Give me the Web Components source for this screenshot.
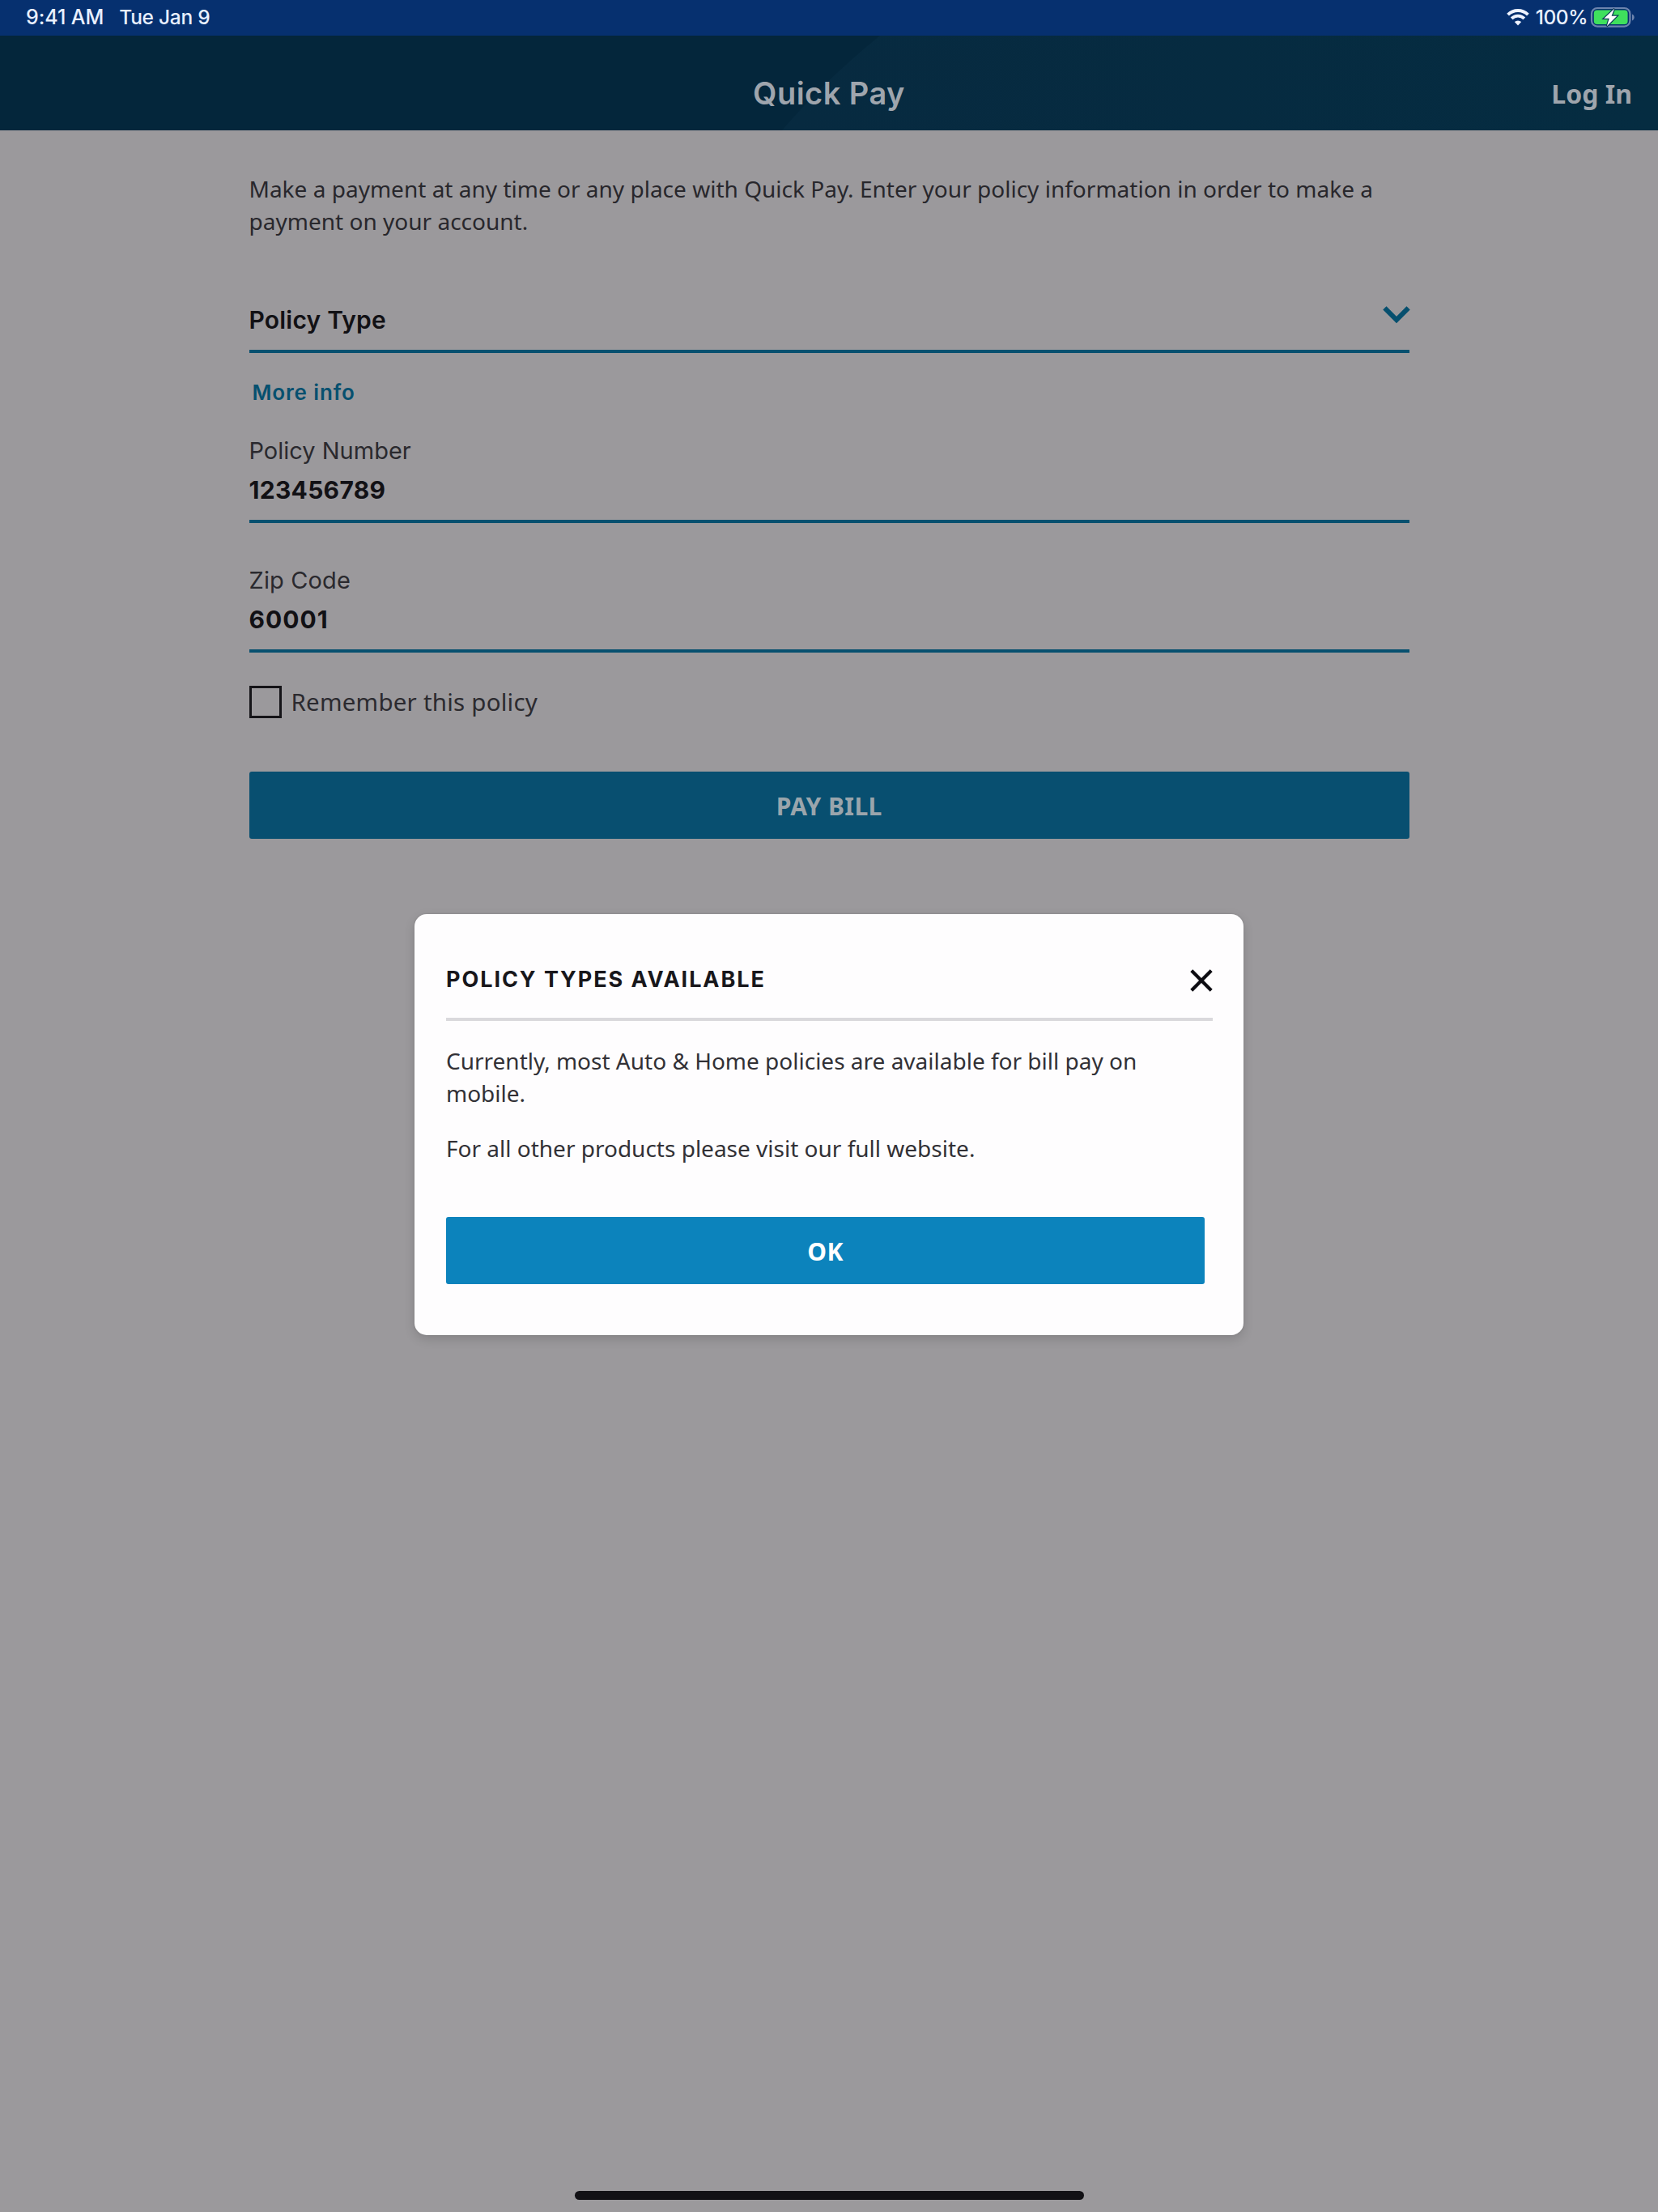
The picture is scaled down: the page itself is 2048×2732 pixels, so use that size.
<!DOCTYPE html>
<html lang="en">
<head>
<meta charset="utf-8">
<title>Quick Pay</title>
<style>
  html, body { margin: 0; padding: 0; }
  body { width: 2048px; height: 2732px; overflow: hidden; background: #9b999c; }
</style>
</head>
<body>
<quick-pay-app></quick-pay-app>

<script>
const define = (name, html) => {
  const template = document.createElement('template');
  template.innerHTML = html;
  customElements.define(name, class extends HTMLElement {
    constructor() {
      super();
      this.attachShadow({ mode: 'open' }).append(template.content.cloneNode(true));
    }
  });
};

/* iPad status bar */
define('status-bar', `
<style>
  :host { display: flex; align-items: center; justify-content: space-between; height: 44px; box-sizing: border-box;
    padding: 0 28px 2px 32px; background: #06306f; color: #e9f0ff; font: 500 25px/42px Inter, sans-serif; }
  .side { display: flex; align-items: center; }
  .time { letter-spacing: -.06px; margin-right: 19px; }
  .date { font-size: 24.5px; letter-spacing: -.28px; }
  .level { font-size: 24.5px; letter-spacing: -.5px; margin: 0 3px 0 8px; }
  svg { display: block; }
</style>
<div class="side"><span class="time">9:41 AM</span><span class="date">Tue Jan 9</span></div>
<div class="side">
  <svg width="28" height="22" viewBox="0 0 28 22" fill="none" stroke="#eef3ff" stroke-width="3.9">
    <path d="M1.6 8.1a17.6 17.6 0 0 1 24.8 0"/>
    <path d="M6.2 12.9a11 11 0 0 1 15.6 0"/>
    <path d="M14 21.4l-4.2-4.3a6 6 0 0 1 8.4 0z" fill="#eef3ff" stroke="none"/>
  </svg>
  <span class="level">100%</span>
  <svg width="56" height="26" viewBox="0 0 56 26">
    <rect x="2" y="2" width="47.4" height="22.6" rx="7" fill="none" stroke="#6d84ae" stroke-width="2.2"/>
    <path d="M52 9.6c3.6 1.3 3.6 6.5 0 7.8z" fill="#6d84ae"/>
    <rect x="4.8" y="4.6" width="41.8" height="17.5" rx="4" fill="#3fe05d"/>
    <path d="M30.1 2.8L17.3 14.7h6.5L20.8 24.3 33.3 11.7h-6.7z" fill="#fff" stroke="#0b3a57" stroke-width="2.4" paint-order="stroke"/>
  </svg>
</div>`);

/* Page header with title and log-in action */
define('app-header', `
<style>
  :host { display: grid; grid-template-columns: 1fr auto 1fr; align-items: center; position: relative; height: 117px;
    box-sizing: border-box; padding: 24px 32px 0; color: #9fa5ad; background: #04263b; }
  .swoosh { position: absolute; inset: 0; width: 100%; height: 100%; }
  h1 { grid-column: 2; margin: 0; position: relative; font: 600 38px/46px Inter, sans-serif; letter-spacing: .46px; }
  .action { justify-self: end; position: relative; padding-top: 2px; font: 700 32px/46px "Noto Sans", sans-serif; }
</style>
<svg class="swoosh" viewBox="0 0 2048 117" preserveAspectRatio="none">
  <defs><linearGradient id="g" x1="0" x2="1"><stop offset="0" stop-color="#072a40"/><stop offset="1" stop-color="#052c41"/></linearGradient></defs>
  <path d="M1087 0Q1018 56 966 117H2048V0z" fill="url(#g)"/>
</svg>
<h1><slot></slot></h1>
<span class="action"><slot name="action"></slot></span>`);

/* Underlined form field: optional label above a bold value, optional trailing icon */
define('form-field', `
<style>
  :host { display: flex; align-items: flex-start; justify-content: space-between; border-bottom: 4px solid #07506f; color: #121115; }
  .text { display: flex; flex-direction: column; font: 700 30px/49px Inter, sans-serif; }
  ::slotted([slot=label]) { font-weight: 400; font-size: 29px; color: #2a292e; }
</style>
<div class="text"><slot name="label"></slot><slot></slot></div>
<slot name="icon"></slot>`);

define('check-option', `
<style>
  :host { display: flex; align-items: center; gap: 12px; height: 40px; color: #2b2a2f;
    font: 400 29.5px/40px "Noto Sans", sans-serif; letter-spacing: .22px; }
  i { width: 40px; height: 40px; box-sizing: border-box; border: 3px solid #151418; }
</style>
<i></i><span><slot></slot></span>`);

define('solid-button', `
<style>
  :host { display: flex; align-items: center; justify-content: center; height: 83px; box-sizing: border-box; padding-top: 2px;
    border-radius: 3px; background: var(--fill); color: var(--ink);
    font: 700 30px/40px "Noto Sans", sans-serif; letter-spacing: .4px; }
</style>
<slot></slot>`);

/* Modal card centred over the page */
define('info-dialog', `
<style>
  :host { display: block; width: 1024px; height: 520px; box-sizing: border-box; padding: 58px 38px 0 39px;
    background: #fefdfe; border-radius: 15px; box-shadow: 0 5px 14px rgba(0,0,0,.14), 0 0 3px rgba(0,0,0,.1); }
  header { display: flex; align-items: center; justify-content: space-between; height: 74px; box-sizing: border-box;
    padding-bottom: 23px; border-bottom: 4px solid #dad9dc; }
  h2 { margin: 0; padding-bottom: 2px; font: 700 27px/40px Inter, sans-serif; letter-spacing: 1.95px; color: #18171b; }
  svg { display: block; }
  .body { display: flex; flex-direction: column; gap: 28px; margin: 29px 0 65px;
    font: 400 28px/40px "Noto Sans", sans-serif; color: #323136; }
  solid-button { --fill: #0c83bc; --ink: #fff; margin-right: 10px; }
</style>
<header>
  <h2><slot name="title"></slot></h2>
  <svg width="28" height="28" viewBox="0 0 28 28" stroke="#0d0c12" stroke-width="4.2"><path d="M1.8 1.8L26.2 26.2M26.2 1.8L1.8 26.2"/></svg>
</header>
<div class="body"><slot></slot></div>
<solid-button><slot name="confirm"></slot></solid-button>`);

define('quick-pay-app', `
<style>
  :host { display: block; position: relative; width: 2048px; height: 2732px; overflow: hidden; background: #9b999c; }
  main { display: flex; flex-direction: column; width: 1433.5px; margin-left: 307.5px; padding-top: 52px; }
  .intro { margin: 0; font: 400 28px/40px "Noto Sans", sans-serif; letter-spacing: .01px; color: #28272c; }
  .type { margin-top: 78px; height: 61px; }
  .type span { font-weight: 600; letter-spacing: .2px; }
  .chevron { display: block; margin: 7px -1px 0 0; }
  .more { align-self: flex-start; margin: 29px 0 27px 4px; font: 600 26px/40px Inter, sans-serif; letter-spacing: .85px; color: #06506f; }
  .number, .zip { height: 110px; }
  .number .v { letter-spacing: .29px; }
  .zip { margin-top: 46px; }
  .zip [slot=label] { letter-spacing: .14px; }
  .zip .v { letter-spacing: 1px; }
  check-option { margin-top: 41px; }
  .pay { margin-top: 66px; --fill: #084f70; --ink: #9aa5ac; }
  info-dialog { position: absolute; left: 512px; top: 1129px; }
  .home { position: absolute; left: 709.5px; bottom: 15px; width: 629.5px; height: 11px; border-radius: 6px; background: #121115; }
  p { margin: 0; }
</style>
<status-bar></status-bar>
<app-header>Quick Pay<span slot="action">Log In</span></app-header>
<main>
  <p class="intro">Make a payment at any time or any place with Quick Pay. Enter your policy information in order to make a payment on your account.</p>
  <form-field class="type">
    <span>Policy Type</span>
    <svg slot="icon" class="chevron" width="34" height="22" viewBox="0 0 34 22" fill="none" stroke="#064f6e" stroke-width="6"><path d="M2.4 2.4L17 17 31.6 2.4"/></svg>
  </form-field>
  <span class="more">More info</span>
  <form-field class="number"><span slot="label">Policy Number</span><span class="v">123456789</span></form-field>
  <form-field class="zip"><span slot="label">Zip Code</span><span class="v">60001</span></form-field>
  <check-option>Remember this policy</check-option>
  <solid-button class="pay">PAY BILL</solid-button>
</main>
<info-dialog>
  <span slot="title">POLICY TYPES AVAILABLE</span>
  <p>Currently, most Auto &amp; Home policies are available for bill pay on mobile.</p>
  <p>For all other products please visit our full website.</p>
  <span slot="confirm">OK</span>
</info-dialog>
<div class="home"></div>`);
</script>
</body>
</html>
